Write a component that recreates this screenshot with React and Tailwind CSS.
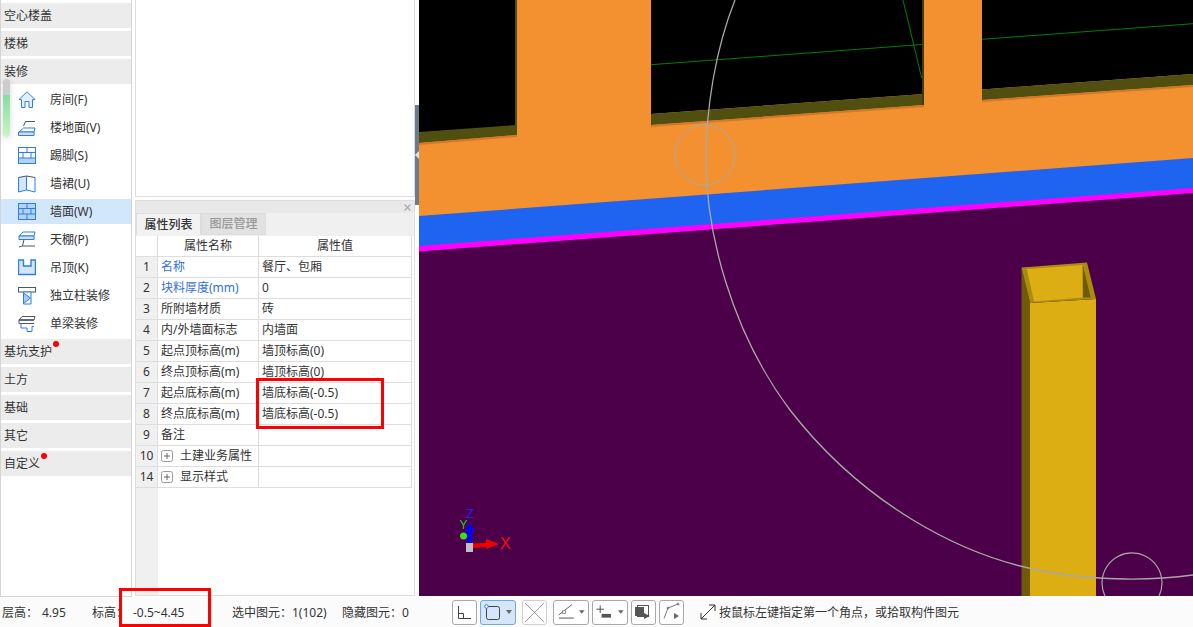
import React from "react";

const BLUE = "#2b7de9";
const DARK = "#4b5563";

const Icon = ({ children }) => (
  <svg width="18" height="18" viewBox="0 0 18 18" fill="none" strokeWidth="1" className="shrink-0">
    {children}
  </svg>
);

const icons = {
  room: (
    <path d="M9 .8 L1 8.5 H3.5 V16.5 H7 V10.5 H11 V16.5 H14.5 V8.5 H17 Z" stroke={BLUE} fill="#e3effd" />
  ),
  floor: (
    <>
      <path d="M5.5 7 L7.5 2.5 H17" stroke={DARK} />
      <path d="M1 13 L5.5 9 H17 L16 13 Z" stroke={BLUE} fill="#fff" />
      <path d="M.5 13 H16 V16.5 H.5 Z" stroke={BLUE} fill="#cfe2fb" />
    </>
  ),
  kick: (
    <>
      <rect x=".5" y="11" width="17" height="5.5" fill="#b5d2f7" />
      <rect x=".5" y=".5" width="17" height="16" stroke={BLUE} />
      <path d="M.5 5.5 H17.5 M.5 11 H17.5 M9 .5 V5.5 M5 5.5 V11 M13 5.5 V11" stroke={BLUE} />
    </>
  ),
  skirt: (
    <>
      <path d="M.5 2.5 L8.5 1 V15 L.5 17 Z" fill="#d5e6fc" />
      <path d="M.5 2.5 L8.5 1 L17 2.5" stroke={DARK} />
      <path d="M.5 2.5 V17 L8.5 15 L17 17 V2.5 M8.5 1 V15" stroke={BLUE} />
    </>
  ),
  wall: (
    <>
      <rect x=".5" y=".5" width="17" height="16" stroke={BLUE} fill="#b5d2f7" />
      <path d="M.5 5.5 H17.5 M.5 11 H17.5 M9 .5 V5.5 M5 5.5 V11 M13 5.5 V11 M9 11 V16.5" stroke={BLUE} />
    </>
  ),
  ceil: (
    <>
      <path d="M1 5 L5 1 H17 L16 5 Z" stroke={BLUE} fill="#fff" />
      <path d="M1 5 H16 V8.5 H1 Z" stroke={BLUE} fill="#cfe2fb" />
      <path d="M6 8.5 L4.5 15 H17 M1 16 L4.5 15" stroke={DARK} />
    </>
  ),
  hang: (
    <path d="M.5 1 H5.5 V7 H13 V1 H17.5 V15.5 H.5 Z" stroke={BLUE} fill="#d5e6fc" strokeWidth="1.4" />
  ),
  column: (
    <>
      <rect x=".5" y=".5" width="17" height="4.5" stroke={DARK} fill="#fff" />
      <path d="M5.5 5 H13 V17 H5.5 Z" stroke={BLUE} fill="#fff" />
      <path d="M5.5 6 L12.5 11 L5.5 16.5 Z" fill="#a9caf6" stroke={BLUE} />
    </>
  ),
  beam: (
    <>
      <path d="M1 5 L4 1.5 H17 L16 5 Z" stroke={DARK} fill="#fff" />
      <path d="M1 5 H16 L1 5 V8.5 H16" stroke={DARK} />
      <path d="M3 8.5 V13 H9 V16.5 H14 V11.5 H16" stroke={BLUE} />
    </>
  ),
};

const topCats = ["空心楼盖", "楼梯", "装修"];
const items = [
  ["room", "房间(F)"],
  ["floor", "楼地面(V)"],
  ["kick", "踢脚(S)"],
  ["skirt", "墙裙(U)"],
  ["wall", "墙面(W)"],
  ["ceil", "天棚(P)"],
  ["hang", "吊顶(K)"],
  ["column", "独立柱装修"],
  ["beam", "单梁装修"],
];
const bottomCats = [
  ["基坑支护", "left-[52px]"],
  ["土方", ""],
  ["基础", ""],
  ["其它", ""],
  ["自定义", "left-[40px]"],
];

const rows = [
  ["1", "名称", "餐厅、包厢", true],
  ["2", "块料厚度(mm)", "0", true],
  ["3", "所附墙材质", "砖"],
  ["4", "内/外墙面标志", "内墙面"],
  ["5", "起点顶标高(m)", "墙顶标高(0)"],
  ["6", "终点顶标高(m)", "墙顶标高(0)"],
  ["7", "起点底标高(m)", "墙底标高(-0.5)"],
  ["8", "终点底标高(m)", "墙底标高(-0.5)"],
  ["9", "备注", ""],
];

const Category = ({ label, dot }) => (
  <div className="relative h-[25px] mb-[3px] bg-[#ececec] pl-[3px] leading-[26px] text-[#333]">
    {label}
    {dot && <span className={`absolute top-[2px] w-[6px] h-[6px] rounded-full bg-[#f00] ${dot}`}></span>}
  </div>
);

const Sidebar = () => (
  <div className="relative w-[132px] shrink-0 border-x border-b border-[#d4d4d4] pt-[3px] bg-white">
    {topCats.map((c, i) => (
      <div key={c} className={`h-[25px] bg-[#ececec] pl-[3px] leading-[26px] text-[#333] ${i < 2 ? "mb-[3px]" : ""}`}>
        {c}
      </div>
    ))}
    <div className="pt-[2px] mb-[1px]">
      {items.map(([icon, label]) => (
        <div key={label} className="h-[28px] pt-[1px] pb-[2px]">
          <div
            className={`flex items-center h-[25px] pl-[17px] gap-[14px] text-[#333] ${label === "墙面(W)" ? "bg-[#d2e6fc]" : ""}`}
          >
            <Icon>{icons[icon]}</Icon>
            <span>{label}</span>
          </div>
        </div>
      ))}
    </div>
    {bottomCats.map(([c, dot]) => (
      <Category key={c} label={c} dot={dot} />
    ))}
    {/* little scroll thumb lying over the list */}
    <div className="absolute left-[2px] top-[79px] w-[7px] h-[58px] rounded-full overflow-hidden shadow-[0_2px_6px_rgba(0,0,0,0.15)]">
      <div className="h-[16px] bg-[#cccccc]"></div>
      <div className="h-[42px] bg-gradient-to-b from-[#84dca6] to-[#c9f6c4]"></div>
    </div>
  </div>
);

const PlusBox = () => (
  <svg width="12" height="12" viewBox="0 0 12 12" fill="none" className="shrink-0">
    <rect x=".5" y=".5" width="11" height="11" rx="2" stroke="#999" />
    <path d="M3 6 H9 M6 3 V9" stroke="#666" />
  </svg>
);

const Row = ({ no, name, value, link, expand }) => (
  <div className="flex h-[21px] border-b border-[#dddddd] leading-[20px]">
    <div className="w-[22px] shrink-0 bg-[#f0f0f0] border-r border-[#dddddd] text-center text-[#333]">{no}</div>
    <div className={`w-[101px] shrink-0 border-r border-[#dddddd] pl-[3px] flex items-center ${link ? "text-[#2f6fe0]" : "text-[#333]"}`}>
      {expand && (
        <span className="mr-[7px]">
          <PlusBox />
        </span>
      )}
      {name}
    </div>
    <div className="flex-1 pl-[3px] text-[#333] border-r border-[#dddddd]">{value}</div>
  </div>
);

const PropertyPanel = () => (
  <div className="relative flex-1 flex flex-col border border-[#dddddd] bg-white">
    <div className="h-[12px] bg-[#e9e9e9] flex items-center justify-end pr-[3px]">
      <svg width="7" height="7" viewBox="0 0 7 7">
        <path d="M.5 .5 L6.5 6.5 M6.5 .5 L.5 6.5" stroke="#aaa" strokeWidth="1.2" />
      </svg>
    </div>
    <div className="flex h-[23px] bg-[#f0f0f0] border-b border-[#f0f0f0]">
      <div className="w-[65px] border border-[#dddddd] border-b-0 bg-[#f2f2f2] text-center leading-[21px] font-medium text-[#333]">
        属性列表
      </div>
      <div className="w-[65px] border border-[#dddddd] bg-[#e2e2e2] text-center leading-[20px] font-medium text-[#999]">
        图层管理
      </div>
    </div>
    <div className="flex-1 flex">
      <div className="w-[276px] flex flex-col">
        <div className="flex h-[21px] border-b border-[#dddddd] leading-[20px] text-[#333]">
          <div className="w-[22px] border-r border-[#dddddd]"></div>
          <div className="w-[101px] border-r border-[#dddddd] text-center">属性名称</div>
          <div className="flex-1 border-r border-[#dddddd] text-center">属性值</div>
        </div>
        {rows.map(([no, name, value, link]) => (
          <Row key={no} no={no} name={name} value={value} link={link} />
        ))}
        <Row no="10" name="土建业务属性" value="" expand />
        <Row no="14" name="显示样式" value="" expand />
        <div className="flex-1 w-[22px] bg-[#f0f0f0]"></div>
      </div>
    </div>
    {/* red mark round the two edited values */}
    <div className="absolute left-[120px] top-[177px] w-[128px] h-[51px] border-[3px] border-[#f00]"></div>
  </div>
);

const Viewport = () => (
  <svg viewBox="419 0 774 596" width="774" height="596" className="block">
    <rect x="419" y="0" width="774" height="596" fill="#f39130" />

    {/* windows */}
    <path d="M419 0 H517 V127 L419 135 Z" fill="#000" />
    <path d="M419 132 L516 125 L517 135 L419 143 Z" fill="#514f10" />
    <path d="M515 0 H517 V135 H515 Z" fill="#514f10" />
    <path d="M419 143 L517 135 V137 L419 145 Z" fill="#d0792a" />

    <path d="M651 0 H924 V94 L651 114 Z" fill="#000" />
    <path d="M651 114 L924 94 V105 L651 125 Z" fill="#514f10" />
    <path d="M922 0 H924 V105 H922 Z" fill="#3d3c10" />
    <path d="M651 125 L924 105 V107 L651 127 Z" fill="#d0792a" />

    <path d="M982 0 H1193 V74 L982 89.5 Z" fill="#000" />
    <path d="M982 89.5 L1193 74 V85 L982 100 Z" fill="#514f10" />
    <path d="M982 100 L1193 85 V87 L982 102 Z" fill="#d0792a" />

    <path d="M651 64.7 L922 44.5 M982 39.3 L1193 23.7 M903 0 L921.7 78" stroke="#008000" strokeWidth="1" fill="none" />

    {/* floor band and slab */}
    <path d="M419 216 L1193 158 V596 H419 Z" fill="#1e64f0" />
    <path d="M419 246 L1193 188 V596 H419 Z" fill="#ff00ff" />
    <path d="M419 251.500 L1193 193 V596 H419 Z" fill="#4b0049" />

    {/* column */}
    <path d="M1021.500 267.500 L1030 303 V596 H1021.500 Z" fill="#6f5a08" />
    <path d="M1030 303 L1096 299 V596 H1030 Z" fill="#dcae14" />
    <path d="M1021.500 267.500 L1087 262.500 L1096 299 L1030 303 Z" fill="#a98b10" />
    <path d="M1026.700 269 L1082.700 265 V297.500 L1034 301.500 Z" fill="#dcae14" />
    <path d="M1082.700 265 L1090.700 297.500 H1083 Z" fill="#6f5a08" />

    {/* arc and snap circles */}
    <path
      d="M735 0 C715 50 706 110 706 160 C706 230 730 330 790 410 C860 500 960 560 1060 574 C1100 580 1150 581 1193 575"
      stroke="#a8a8a8"
      strokeWidth="1.3"
      fill="none"
    />
    <circle cx="705" cy="155" r="30" stroke="#a8a8a8" fill="none" />
    <path d="M1105 596 A30 30 0 1 1 1159 596" stroke="#a8a8a8" strokeWidth="1.2" fill="none" />

    {/* axis gizmo */}
    <path d="M467 544 V532 H465 L469.500 522 L475 532 H472 V544 Z" fill="#0000ff" />
    <circle cx="463.500" cy="536" r="3.500" fill="#3ce010" />
    <rect x="466" y="543" width="7" height="9" fill="#bfbfbf" />
    <path d="M473 543.500 L486 543 V539 L499 544 L486 549 V547 L473 548 Z" fill="#f00000" />
    <text x="500" y="549" fill="#ee1111" fontSize="16" fontFamily="Liberation Sans, sans-serif">X</text>
    <text x="459.500" y="529" fill="#22cc22" fontSize="12" fontFamily="Liberation Sans, sans-serif">Y</text>
    <text x="466" y="518" fill="#2222ee" fontSize="13" fontFamily="Liberation Sans, sans-serif">Z</text>
  </svg>
);

const ToolBtn = ({ w, active, muted, caret, children }) => (
  <div
    className={`flex items-center h-[25px] rounded-[3px] border ${w} ${
      active ? "border-[#6ea6e6] bg-[#d5e6fa]" : muted ? "border-[#d0d0d0] bg-white" : "border-[#a8a8a8] bg-white"
    }`}
  >
    {children}
    {caret && (
      <svg width="6" height="4" viewBox="0 0 6 4" className="ml-auto mr-[3px]">
        <path d="M0 0 H6 L3 4 Z" fill="#666" />
      </svg>
    )}
  </div>
);

const StatusBar = () => (
  <div className="relative h-[30px] bg-[#fbfbfb] flex items-center text-[#333]">
    <span className="w-[42px] pl-[2px] pt-[2px]">层高：</span>
    <span className="w-[50px] pt-[2px]">4.95</span>
    <span className="w-[41px] pt-[2px]">标高：</span>
    <span className="w-[99px] pt-[2px]">-0.5~4.45</span>
    <span className="w-[110px] pt-[2px]">选中图元：1(102)</span>
    <span className="w-[110px] pt-[2px]">隐藏图元：0</span>
    <div className="flex gap-[3px]">
      <ToolBtn w="w-[25px]">
        <svg width="23" height="23" viewBox="0 0 23 23" fill="none" stroke="#444">
          <path d="M5.500 5 V17.500 H18 M5.500 12.500 H10.500 V17.500" />
        </svg>
      </ToolBtn>
      <ToolBtn w="w-[36px] mr-[3px]" active caret>
        <svg width="20" height="23" viewBox="0 0 20 23" fill="none" className="ml-[2px]">
          <rect x="3.500" y="5.500" width="13" height="13" rx="2" stroke="#444" />
          <circle cx="3.500" cy="5.500" r="1.800" stroke={BLUE} fill="#fff" />
        </svg>
      </ToolBtn>
      <ToolBtn w="w-[25px] mr-[3px]" muted>
        <svg width="23" height="23" viewBox="0 0 23 23" fill="none" stroke="#a0a0a0">
          <path d="M2 2 L21 21 M21 2 L2 21" />
        </svg>
      </ToolBtn>
      <ToolBtn w="w-[36px]" caret>
        <svg width="24" height="23" viewBox="0 0 24 23" fill="none" stroke="#555" className="ml-[3px]">
          <path d="M2 14 L16 3" />
          <path d="M2 17.500 H18" stroke="#888" strokeWidth="1.500" />
          <rect x="6" y="9.500" width="3" height="3" fill="#fff" stroke="#888" />
        </svg>
      </ToolBtn>
      <ToolBtn w="w-[36px]" caret>
        <svg width="24" height="23" viewBox="0 0 24 23" fill="none" className="ml-[3px]">
          <path d="M4.500 4 V12 M.5 8 H8.500" stroke="#444" />
          <rect x="6" y="13" width="10" height="4" fill="#555" />
        </svg>
      </ToolBtn>
      <ToolBtn w="w-[25px]">
        <svg width="23" height="23" viewBox="0 0 23 23" fill="none">
          <rect x="5.500" y="4.500" width="11" height="11" stroke="#555" />
          <rect x="3" y="6" width="9" height="9" fill="#555" />
          <path d="M12 12 L18 15 L12 18 Z" fill="#555" />
        </svg>
      </ToolBtn>
      <ToolBtn w="w-[25px]">
        <svg width="23" height="23" viewBox="0 0 23 23" fill="none" stroke="#777">
          <path d="M4 17.500 L8 7 L18 3" />
          <circle cx="8" cy="7" r="1" />
          <circle cx="18" cy="3" r="1" />
          <path d="M14 12 L19 15 L14 18 Z" fill="#666" stroke="none" />
        </svg>
      </ToolBtn>
    </div>
    <svg width="16" height="16" viewBox="0 0 16 16" fill="none" stroke="#333" className="ml-[16px] mr-[3px]">
      <path d="M1 15 L15 1 M9 1 H15 V7 M1 9 V15 H7" />
    </svg>
    <span className="pt-[2px]">按鼠标左键指定第一个角点，或拾取构件图元</span>
    <div className="absolute left-[119px] top-[-9px] w-[92px] h-[39px] border-[3px] border-[#f00]"></div>
  </div>
);

export default function App() {
  return (
    <div className="w-[1193px] h-[627px] overflow-hidden bg-white text-[12px] [font-family:'Noto_Sans','Noto_Sans_CJK_SC',sans-serif]">
      <div className="flex h-[597px]">
        <Sidebar />
        <div className="w-[283px] shrink-0 flex flex-col pl-[3px] pb-[1px] gap-[3px]">
          <div className="h-[197px] shrink-0 border-x border-b border-[#dddddd] bg-white"></div>
          <PropertyPanel />
        </div>
        <div className="w-[4px] shrink-0 pt-[105px]">
          <div className="h-[100px] bg-[#6c7a89] flex items-center">
            <svg width="4" height="8" viewBox="0 0 4 8">
              <path d="M4 0 V8 L0 4 Z" fill="#dde3e8" />
            </svg>
          </div>
        </div>
        <Viewport />
      </div>
      <StatusBar />
    </div>
  );
}
